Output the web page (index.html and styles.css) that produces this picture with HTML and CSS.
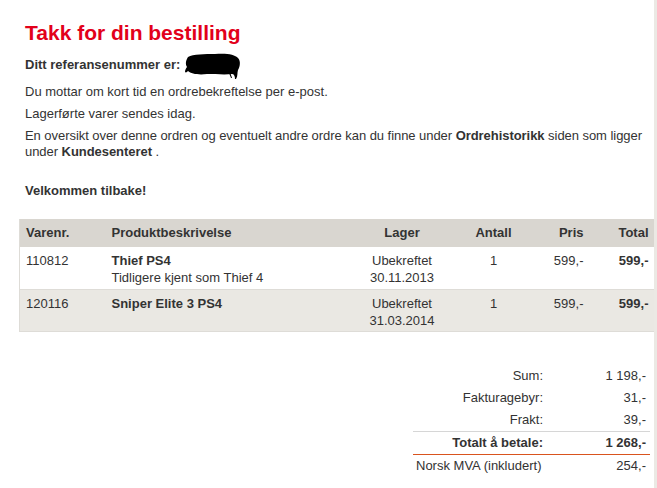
FILE: index.html
```html
<!DOCTYPE html>
<html lang="no">
<head>
<meta charset="utf-8">
<title>Takk for din bestilling</title>
<link rel="stylesheet" href="styles.css">
</head>
<body>
<div class="page">
  <main class="content">
    <h1 class="title">Takk for din bestilling</h1>
    <p class="ref"><strong>Ditt referansenummer er:</strong> <span class="redact"><svg class="blot" viewBox="0 0 56 28" width="56" height="28" aria-hidden="true"><path d="M3 5 C8 2 20 2 30 2 C40 1 50 2 53 6 C56 9 55 15 53 18 C52 21 53 24 51 27 L50 27 C50 24 49 22 47 22 C40 23 30 22 22 22 C14 23 6 22 3 19 C2 20 1 21 0 20 C0 18 1 16 2 15 C0 12 1 8 3 5 Z" fill="#000"/><path d="M45 20 L47 26 L46 26 L44 21 Z" fill="#000"/></svg></span></p>
    <p class="txt first">Du mottar om kort tid en ordrebekreftelse per e-post.</p>
    <p class="txt">Lagerførte varer sendes idag.</p>
    <p class="txt wide">En oversikt over denne ordren og eventuelt andre ordre kan du finne under <strong>Ordrehistorikk</strong> siden som ligger under <strong>Kundesenteret</strong> .</p>
    <p class="welcome">Velkommen tilbake!</p>

    <table class="items">
      <thead>
        <tr>
          <th class="c-nr">Varenr.</th>
          <th class="c-desc">Produktbeskrivelse</th>
          <th class="c-lager">Lager</th>
          <th class="c-ant">Antall</th>
          <th class="c-pris">Pris</th>
          <th class="c-tot">Total</th>
        </tr>
      </thead>
      <tbody>
        <tr>
          <td class="c-nr">110812</td>
          <td class="c-desc"><strong>Thief PS4</strong><br>Tidligere kjent som Thief 4</td>
          <td class="c-lager">Ubekreftet<br>30.11.2013</td>
          <td class="c-ant">1</td>
          <td class="c-pris">599,-</td>
          <td class="c-tot"><strong>599,-</strong></td>
        </tr>
        <tr class="alt">
          <td class="c-nr">120116</td>
          <td class="c-desc"><strong>Sniper Elite 3 PS4</strong></td>
          <td class="c-lager">Ubekreftet<br>31.03.2014</td>
          <td class="c-ant">1</td>
          <td class="c-pris">599,-</td>
          <td class="c-tot"><strong>599,-</strong></td>
        </tr>
      </tbody>
    </table>

    <div class="totals">
      <div class="trow"><span class="lbl">Sum:</span><span class="val">1 198,-</span></div>
      <div class="trow"><span class="lbl">Fakturagebyr:</span><span class="val">31,-</span></div>
      <div class="trow"><span class="lbl">Frakt:</span><span class="val">39,-</span></div>
      <div class="trow grand"><span class="lbl">Totalt å betale:</span><span class="val">1 268,-</span></div>
      <div class="trow vat"><span class="lbl">Norsk MVA (inkludert)</span><span class="val">254,-</span></div>
    </div>
  </main>
  <div class="edge"></div>
</div>
</body>
</html>
```

FILE: styles.css
```css
html, body {
  margin: 0;
  padding: 0;
  background: #ffffff;
}
body {
  font-family: "Liberation Sans", Arial, sans-serif;
  font-size: 13px;
  line-height: 16px;
  color: #333333;
}
.page {
  display: flex;
  min-height: 488px;
}
.content {
  width: 634px;
  margin-left: 19px;
  flex: none;
}
.edge {
  flex: 1;
  margin-left: 1px;
  background: #ebe9e4;
}
.title {
  margin: 20px 0 0;
  padding: 0 6px;
  color: #e2001a;
  font-size: 21px;
  line-height: 26px;
  font-weight: bold;
}
.ref {
  margin: 11px 0 0;
  padding: 0 6px;
}
.redact {
  position: relative;
  display: inline-block;
  width: 56px;
  height: 1px;
}
.blot {
  position: absolute;
  left: 1px;
  top: -16px;
}
.txt {
  margin: 6px 0 0;
  padding: 0 6px;
}
.txt.first {
  margin-top: 11px;
}
.txt.wide {
  padding-right: 0;
  letter-spacing: -0.05px;
}
.welcome {
  margin: 23px 0 0;
  padding: 0 6px;
  font-weight: bold;
}
.items {
  margin-top: 20px;
  width: 634px;
  table-layout: fixed;
  border-collapse: collapse;
  border-left: 1px solid #dedcd7;
  border-bottom: 1px solid #dedcd7;
}
.items th,
.items td {
  box-sizing: border-box;
}
.items th {
  background: #d9d6d0;
  font-weight: bold;
  height: 28px;
  padding: 0 5px 0 6px;
  line-height: 16px;
  vertical-align: middle;
  font-size: 13px;
  color: #333;
}
.items td {
  padding: 5px 5px 2px 6px;
  height: 42px;
  line-height: 17px;
  vertical-align: top;
  border-bottom: 1px solid #dedcd7;
}
.items tbody tr:last-child td {
  border-bottom: none;
}
.items tr.alt td {
  background: #eae8e3;
}
.c-nr { width: 86px; text-align: left; }
.c-desc { width: 251px; text-align: left; }
.c-lager { width: 90px; text-align: center; }
.c-ant { width: 93px; text-align: center; }
.c-pris { width: 49px; text-align: right; }
.c-tot { width: 65px; text-align: right; }
th.c-nr, th.c-desc { text-align: left; }
th.c-lager, th.c-ant { text-align: center; }
th.c-pris, th.c-tot { text-align: right; }

.totals {
  width: 237px;
  margin: 33px 3px 0 auto;
}
.trow {
  display: flex;
  line-height: 22px;
}
.lbl {
  flex: 1;
  text-align: right;
}
.val {
  width: 107px;
  text-align: right;
  padding-right: 4px;
  box-sizing: border-box;
}
.grand {
  font-weight: bold;
  border-top: 1px solid #d6d6d6;
  border-bottom: 1px solid #d9531e;
}
.vat .lbl {
  text-align: left;
  padding-left: 3px;
}
```
